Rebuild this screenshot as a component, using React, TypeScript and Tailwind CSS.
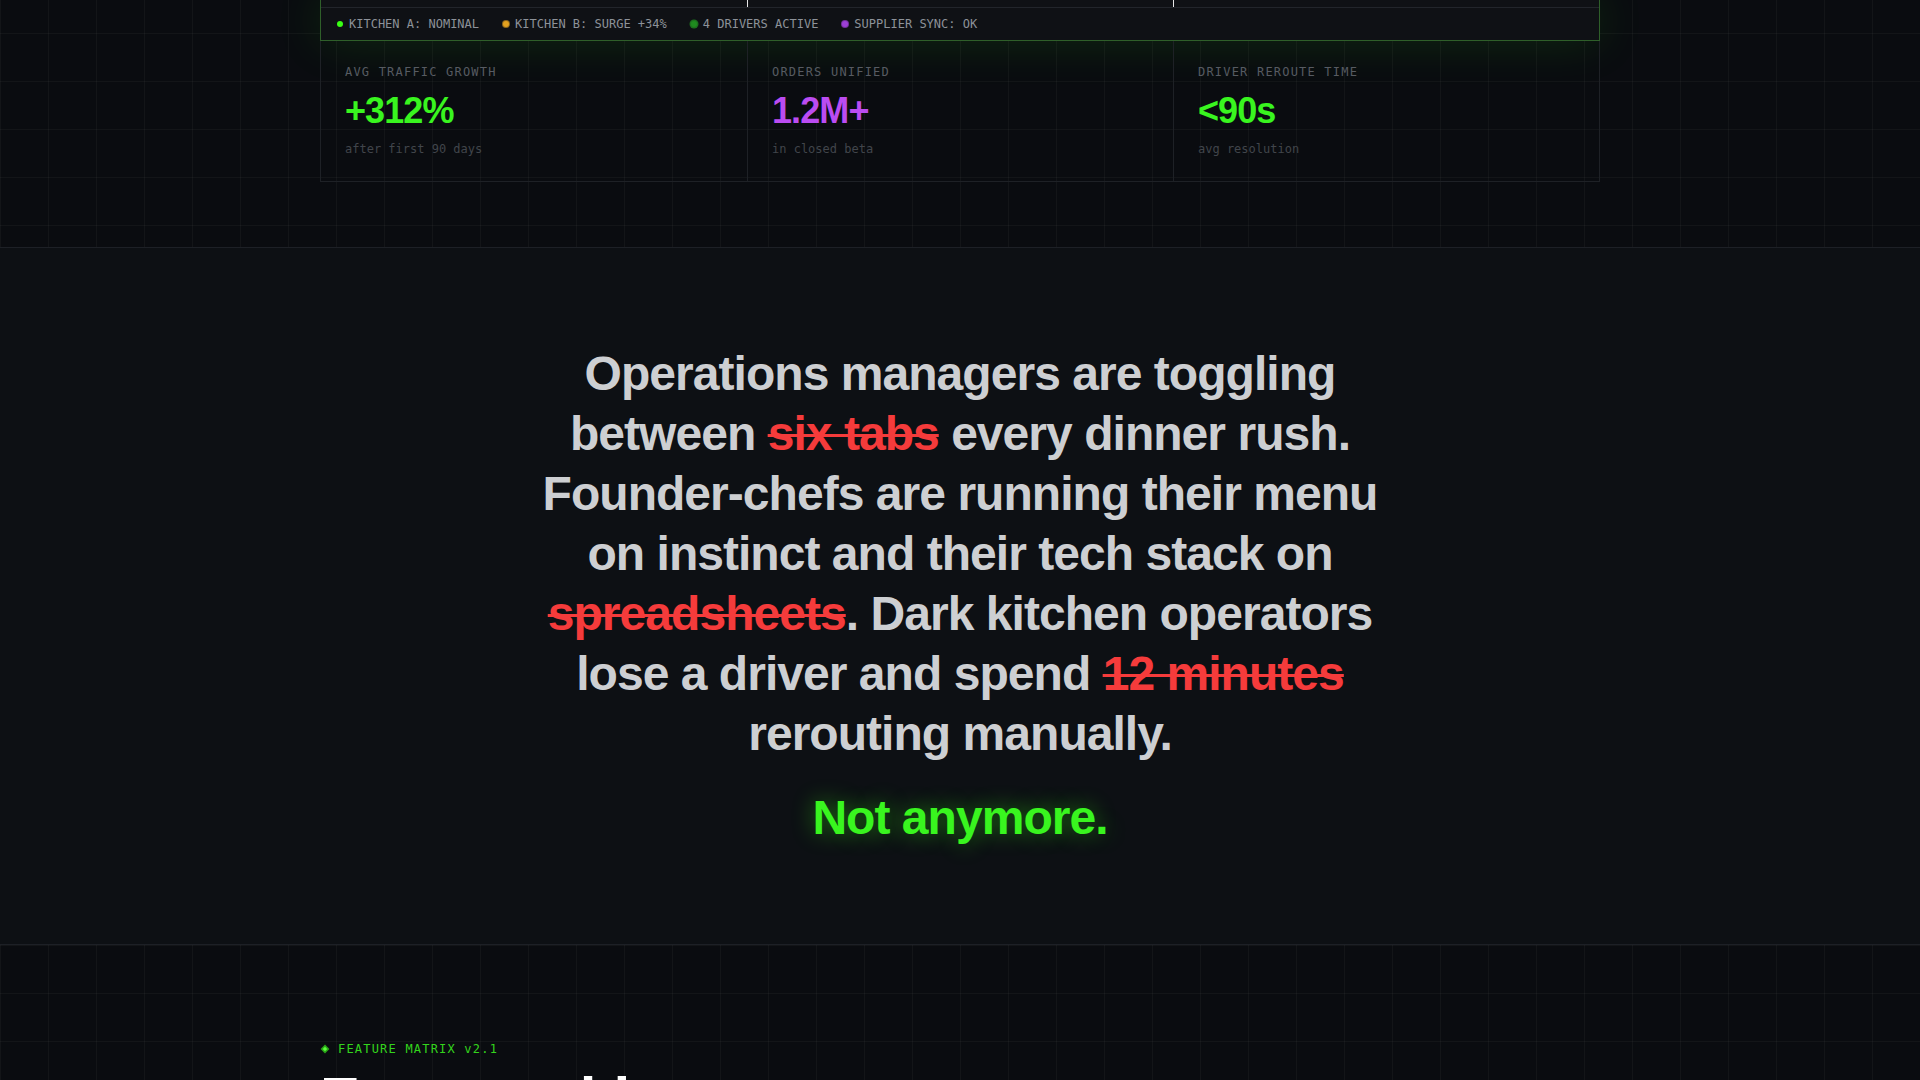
import React from "react";

const mono = "font-['DejaVu_Sans_Mono','Liberation_Mono',monospace]";
const sans = "font-['Liberation_Sans',Arial,sans-serif]";

const gridBg =
  "bg-[linear-gradient(rgba(255,255,255,0.035)_1px,transparent_1px),linear-gradient(90deg,rgba(255,255,255,0.035)_1px,transparent_1px)] bg-[size:48px_48px]";

type Status = { label: string; dot: string };

const statuses: Status[] = [
  { label: "KITCHEN A: NOMINAL", dot: "bg-[#39ff14]" },
  { label: "KITCHEN B: SURGE +34%", dot: "bg-[#e3a11f] shadow-[0_0_0_1px_rgba(227,161,31,0.6)]" },
  { label: "4 DRIVERS ACTIVE", dot: "bg-[#1f8a1f] shadow-[0_0_0_1.5px_rgba(31,138,31,0.8)]" },
  { label: "SUPPLIER SYNC: OK", dot: "bg-[#9d3fd6] shadow-[0_0_0_1px_rgba(157,63,214,0.7)]" },
];

type Stat = { label: string; value: string; color: string; note: string };

const stats: Stat[] = [
  { label: "AVG TRAFFIC GROWTH", value: "+312%", color: "text-[#39f51f]", note: "after first 90 days" },
  { label: "ORDERS UNIFIED", value: "1.2M+", color: "text-[#bb4cf2]", note: "in closed beta" },
  { label: "DRIVER REROUTE TIME", value: "<90s", color: "text-[#39f51f]", note: "avg resolution" },
];

function Struck({ children }: { children: React.ReactNode }) {
  return (
    <span className="text-[#f53b3b] line-through decoration-[#f53b3b] decoration-[3px]">{children}</span>
  );
}

function MatrixGlyph() {
  return (
    <svg width="10" height="10" viewBox="0 0 10 10" className="shrink-0">
      <polygon points="5,0.6 9.4,5 5,9.4 0.6,5" fill="#2aa617" />
      <polygon points="5,2.8 7.2,5 5,7.2 2.8,5" fill="#5cff3c" />
    </svg>
  );
}

export default function App() {
  return (
    <div className={`min-h-screen bg-[#0a0c10] ${sans}`}>
      {/* Hero tail: live dashboard strip and headline stats */}
      <section className={`border-b border-[#1d2026] ${gridBg} bg-[position:0_33px] pb-[65px]`}>
        <div className="mx-auto max-w-7xl">
          <div className="border-x border-b border-[#2f5f2a] bg-[#0f1115] shadow-[0_0_48px_rgba(57,255,20,0.13)]">
            <div className="grid h-[7px] grid-cols-3">
              <div />
              <div className="border-l border-white/90" />
              <div className="border-l border-white/90" />
            </div>
            <div className={`flex items-center gap-6 border-t border-[#22252b] px-4 py-2 text-xs leading-4 text-[#8d9299] ${mono}`}>
              {statuses.map((s) => (
                <div key={s.label} className="flex items-center gap-1.5">
                  <span className={`h-1.5 w-1.5 rounded-full ${s.dot}`} />
                  <span>{s.label}</span>
                </div>
              ))}
            </div>
          </div>
          <div className="grid grid-cols-3 border-x border-b border-[#1e2126]">
            {stats.map((s, i) => (
              <div key={s.label} className={`px-6 pt-[23px] pb-6 ${i > 0 ? "border-l border-[#1e2126]" : ""}`}>
                <div className={`text-xs leading-4 tracking-widest text-[#575b62] ${mono}`}>{s.label}</div>
                <div className={`mt-[11px] text-4xl leading-10 font-bold tracking-tight ${s.color}`}>{s.value}</div>
                <div className={`mt-2.5 text-xs leading-4 text-[#41454b] ${mono}`}>{s.note}</div>
              </div>
            ))}
          </div>
        </div>
      </section>

      {/* Problem statement */}
      <section className="bg-[#0d1014] py-24 text-center">
        <p className="mx-auto max-w-4xl text-5xl leading-tight font-bold tracking-[-0.02em] text-[#cdcfd2]">
          Operations managers are toggling between <Struck>six tabs</Struck> every dinner rush.
          Founder-chefs are running their menu on instinct and their tech stack on{" "}
          <Struck>spreadsheets</Struck>. Dark kitchen operators lose a driver and spend{" "}
          <Struck>12 minutes</Struck> rerouting manually.
        </p>
        <p className="mt-6 text-5xl leading-tight font-bold tracking-[-0.02em] text-[#39f51f] [text-shadow:0_0_22px_rgba(57,255,20,0.45)]">
          Not anymore.
        </p>
      </section>

      {/* Feature matrix */}
      <section className={`border-t border-[#1d2026] ${gridBg} pt-24 pb-24`}>
        <div className="mx-auto max-w-7xl">
          <div className={`flex items-center gap-2 text-xs leading-4 tracking-widest text-[#33d41c] ${mono}`}>
            <MatrixGlyph />
            <span>FEATURE MATRIX v2.1</span>
          </div>
          <h2 className="mt-3 max-w-4xl text-6xl leading-none font-bold tracking-tighter text-white">
            Every world you run, one command center.
          </h2>
        </div>
      </section>
    </div>
  );
}
